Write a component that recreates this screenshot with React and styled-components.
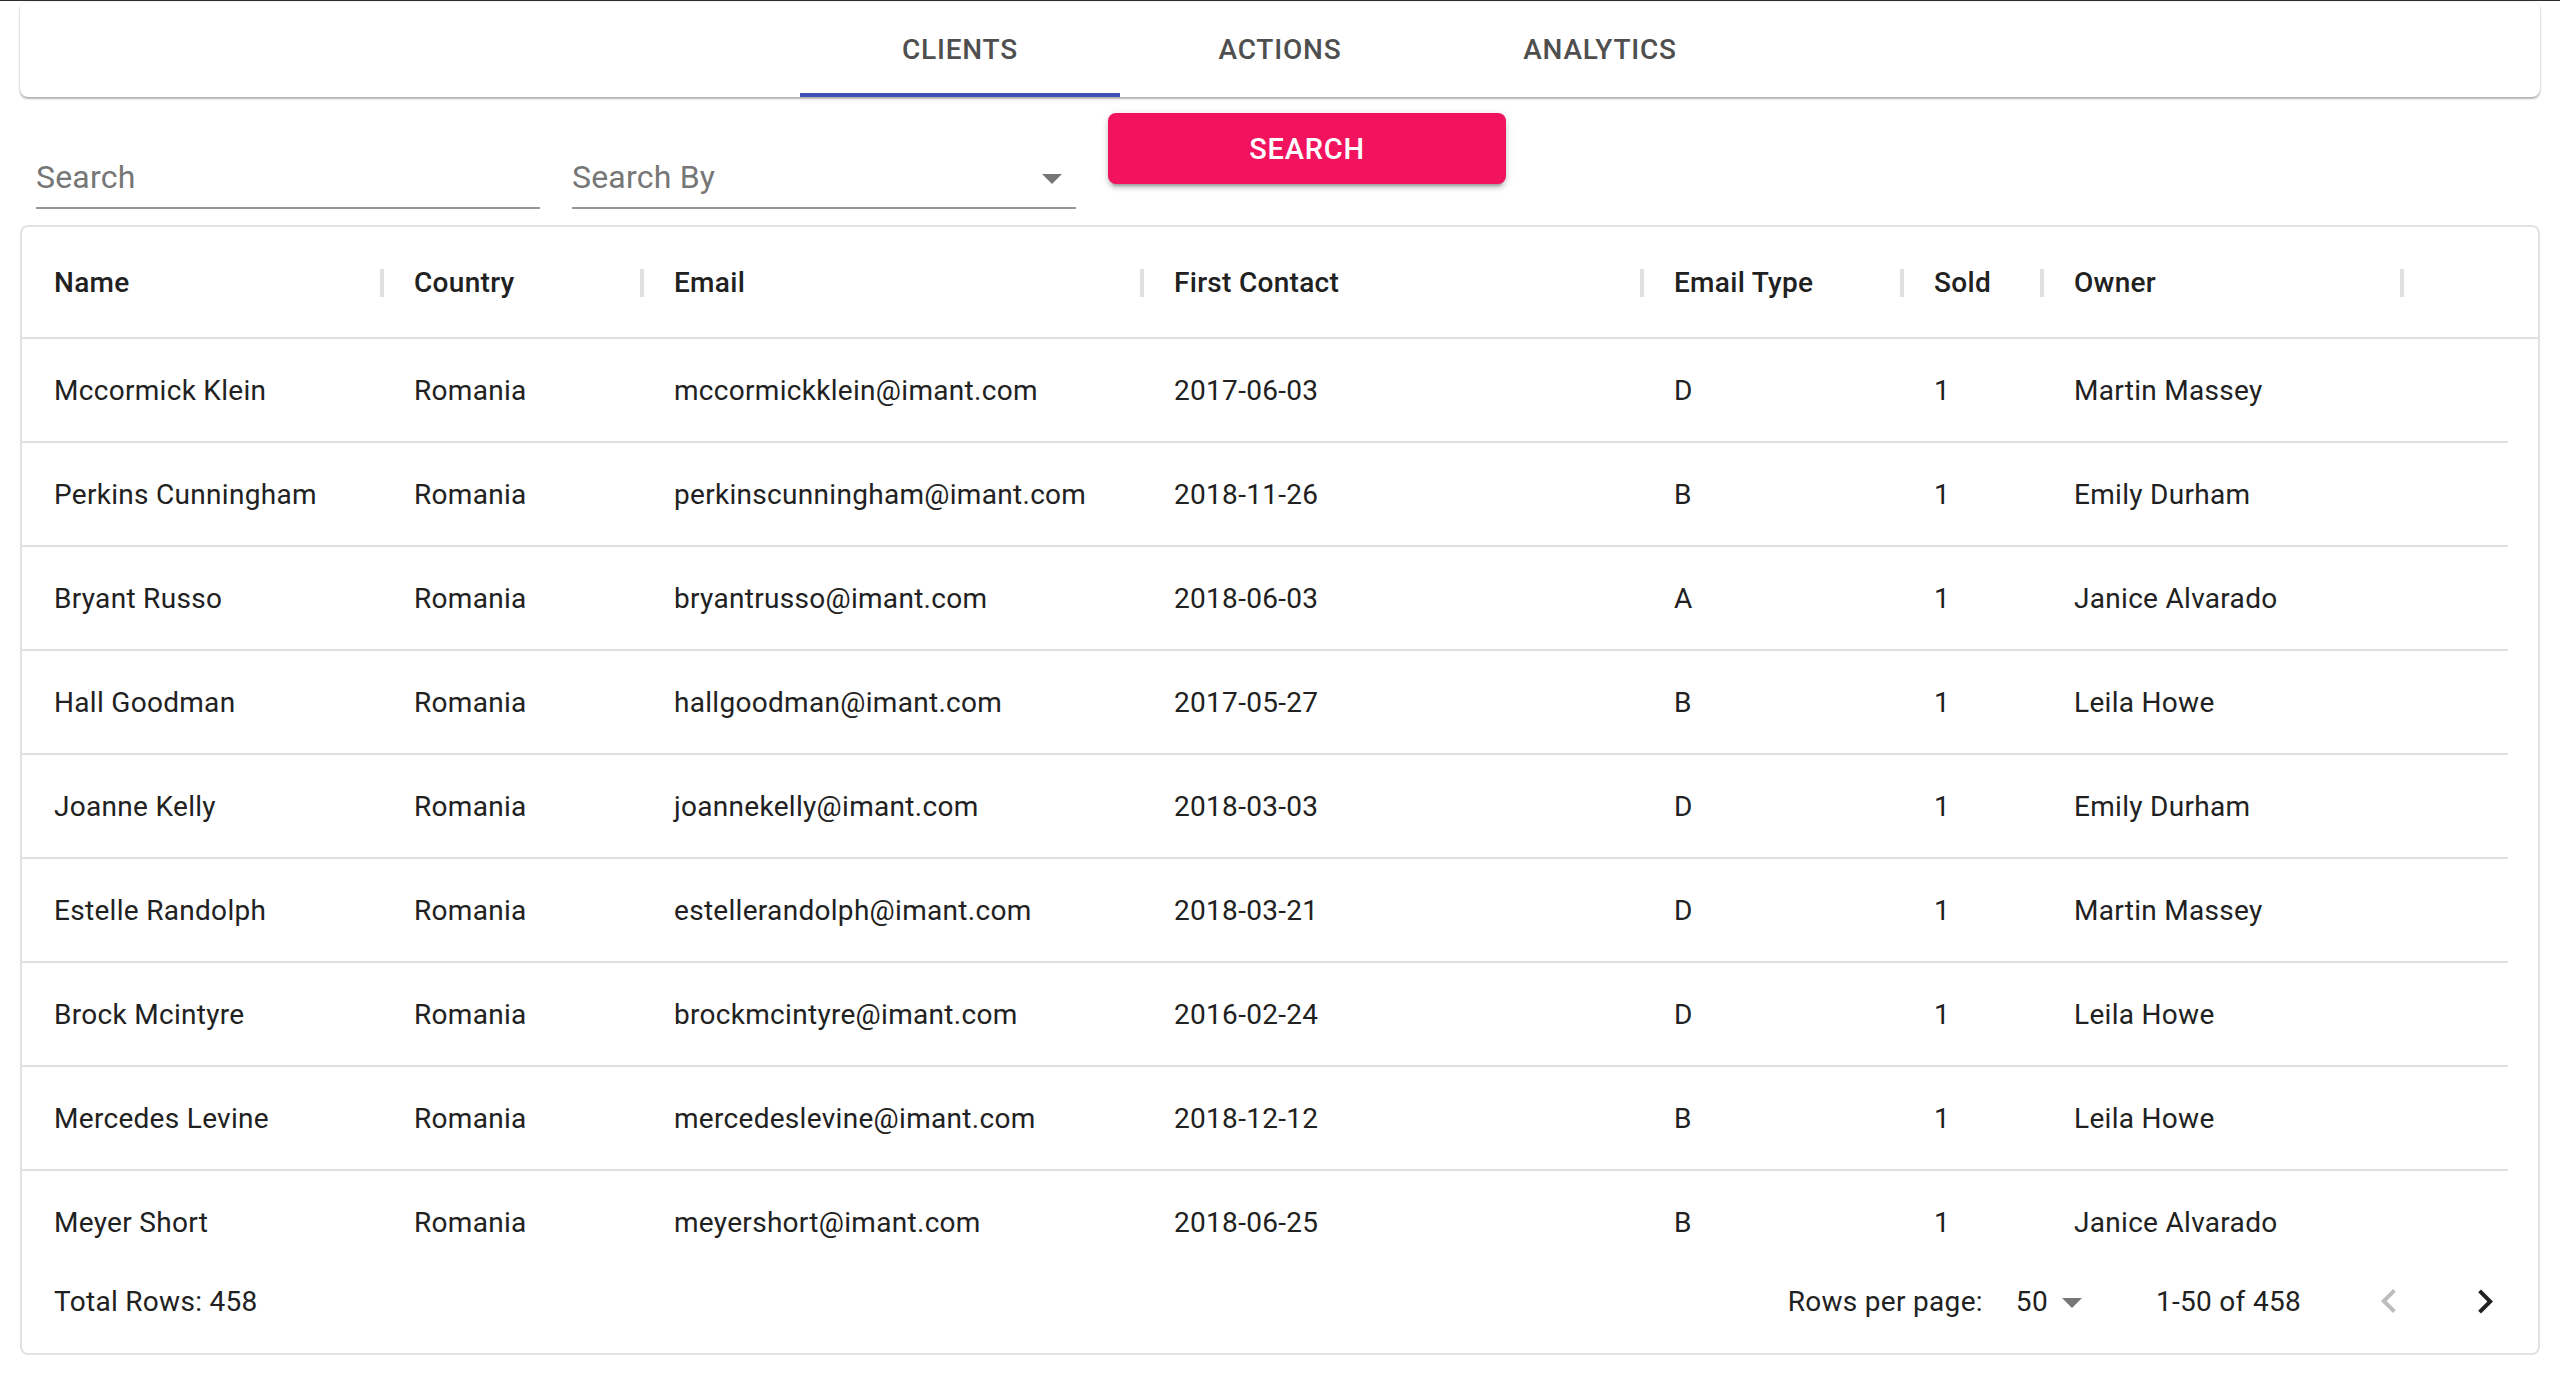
import styled, { createGlobalStyle } from 'styled-components';

const GlobalStyle = createGlobalStyle`
  html, body {
    margin: 0;
    padding: 0;
    background: #ffffff;
  }
  body {
    border-top: 1px solid #2b2b2b;
    font-family: Roboto, "Liberation Sans", Arial, sans-serif;
    color: #212121;
  }
`;

const Page = styled.div`
  padding: 1px 20px 0;
  display: flex;
  flex-direction: column;
`;

const TabBar = styled.nav`
  height: 95px;
  background: #ffffff;
  border-radius: 8px;
  box-shadow: 0 2px 2px rgba(0, 0, 0, 0.28), 0 0 3px rgba(0, 0, 0, 0.12);
  display: flex;
  justify-content: center;
  overflow: hidden;
`;

const Tab = styled.div`
  width: 320px;
  display: flex;
  align-items: center;
  justify-content: center;
  font-size: 28px;
  font-weight: 500;
  letter-spacing: 0.8px;
  text-transform: uppercase;
  color: #4f4f4f;
  box-sizing: border-box;
  border-bottom: 4px solid ${p => (p.$active ? '#3f51b5' : 'transparent')};
  padding-top: 4px;
`;

const SearchRow = styled.div`
  display: flex;
  align-items: flex-start;
  gap: 32px;
  margin: 16px 16px 0;
`;

const Field = styled.div`
  width: 504px;
  height: 96px;
  box-sizing: border-box;
  border-bottom: 2px solid #949494;
  display: flex;
  align-items: flex-end;
  justify-content: space-between;
  padding-bottom: 11px;
`;

const Placeholder = styled.span`
  font-size: 32px;
  line-height: 38px;
  letter-spacing: 0.2px;
  color: #767676;
`;

const DropArrow = styled.svg`
  width: 48px;
  height: 48px;
  fill: #767676;
  flex: none;
  margin-bottom: ${p => p.$drop || 0}px;
`;

const SearchButton = styled.button`
  width: 398px;
  height: 71px;
  border: none;
  border-radius: 8px;
  background: #f2135e;
  color: #ffffff;
  font-family: Roboto, "Liberation Sans", Arial, sans-serif;
  font-size: 29px;
  font-weight: 500;
  letter-spacing: 0.8px;
  text-transform: uppercase;
  box-shadow: 0 6px 2px -4px rgba(0, 0, 0, 0.2), 0 4px 4px rgba(0, 0, 0, 0.14), 0 2px 10px rgba(0, 0, 0, 0.12);
  cursor: pointer;
`;

const TableCard = styled.section`
  margin-top: 16px;
  border: 2px solid #e2e2e2;
  border-radius: 8px;
  background: #ffffff;
  display: flex;
  flex-direction: column;
  overflow: hidden;
  letter-spacing: 0.3px;
`;

const COLUMNS = '360px 260px 500px 500px 260px 140px 360px 1fr';

const HeaderRow = styled.div`
  display: grid;
  grid-template-columns: ${COLUMNS};
  height: 112px;
  box-sizing: border-box;
  border-bottom: 2px solid #e0e0e0;
`;

const HeadCell = styled.div`
  position: relative;
  display: flex;
  align-items: center;
  padding-left: 32px;
  font-size: 28px;
  font-weight: 500;
  color: #212121;

  &::after {
    content: '';
    display: ${p => (p.$sep ? 'block' : 'none')};
    position: absolute;
    right: -2px;
    top: 42px;
    width: 4px;
    height: 28px;
    background: #e0e0e0;
  }
`;

const Body = styled.div`
  height: 913px;
  overflow: hidden;
  padding-right: 30px;
`;

const Row = styled.div`
  display: grid;
  grid-template-columns: ${COLUMNS};
  height: 104px;
  box-sizing: border-box;
  border-bottom: 2px solid #e0e0e0;
`;

const Cell = styled.div`
  display: flex;
  align-items: center;
  padding-left: 32px;
  font-size: 28px;
  color: #212121;
  white-space: nowrap;
`;

const Footer = styled.div`
  height: 99px;
  display: flex;
  align-items: center;
  justify-content: space-between;
  padding: 0 5px 2px 32px;
  font-size: 28px;
  color: #212121;
`;

const Pagination = styled.div`
  display: flex;
  align-items: center;
`;

const PageSize = styled.div`
  display: flex;
  align-items: center;
  margin-left: 33px;
  margin-right: 60px;
`;

const IconButton = styled.button`
  width: 96px;
  height: 96px;
  border: none;
  background: transparent;
  padding: 0;
  display: flex;
  align-items: center;
  justify-content: center;
  margin-left: ${p => p.$gap || 0}px;
  fill: ${p => (p.disabled ? '#bdbdbd' : '#212121')};
`;

const clients = [
  ['Mccormick Klein', 'mccormickklein@imant.com', '2017-06-03', 'D', 'Martin Massey'],
  ['Perkins Cunningham', 'perkinscunningham@imant.com', '2018-11-26', 'B', 'Emily Durham'],
  ['Bryant Russo', 'bryantrusso@imant.com', '2018-06-03', 'A', 'Janice Alvarado'],
  ['Hall Goodman', 'hallgoodman@imant.com', '2017-05-27', 'B', 'Leila Howe'],
  ['Joanne Kelly', 'joannekelly@imant.com', '2018-03-03', 'D', 'Emily Durham'],
  ['Estelle Randolph', 'estellerandolph@imant.com', '2018-03-21', 'D', 'Martin Massey'],
  ['Brock Mcintyre', 'brockmcintyre@imant.com', '2016-02-24', 'D', 'Leila Howe'],
  ['Mercedes Levine', 'mercedeslevine@imant.com', '2018-12-12', 'B', 'Leila Howe'],
  ['Meyer Short', 'meyershort@imant.com', '2018-06-25', 'B', 'Janice Alvarado'],
];

const headers = ['Name', 'Country', 'Email', 'First Contact', 'Email Type', 'Sold', 'Owner'];

const ArrowDown = ({ drop }) => (
  <DropArrow viewBox="0 0 24 24" $drop={drop}>
    <path d="M7 10l5 5 5-5z" />
  </DropArrow>
);

export default function App() {
  return (
    <Page>
      <GlobalStyle />
      <TabBar>
        <Tab $active>Clients</Tab>
        <Tab>Actions</Tab>
        <Tab>Analytics</Tab>
      </TabBar>

      <SearchRow>
        <Field>
          <Placeholder>Search</Placeholder>
        </Field>
        <Field>
          <Placeholder>Search By</Placeholder>
          <ArrowDown drop={-6} />
        </Field>
        <SearchButton>Search</SearchButton>
      </SearchRow>

      <TableCard>
        <HeaderRow>
          {headers.map(h => (
            <HeadCell key={h} $sep>{h}</HeadCell>
          ))}
          <HeadCell />
        </HeaderRow>
        <Body>
          {clients.map(([name, email, date, type, owner]) => (
            <Row key={email}>
              <Cell>{name}</Cell>
              <Cell>Romania</Cell>
              <Cell>{email}</Cell>
              <Cell>{date}</Cell>
              <Cell>{type}</Cell>
              <Cell>1</Cell>
              <Cell>{owner}</Cell>
              <Cell />
            </Row>
          ))}
        </Body>
        <Footer>
          <span>Total Rows: 458</span>
          <Pagination>
            <span>Rows per page:</span>
            <PageSize>
              <span>50</span>
              <ArrowDown />
            </PageSize>
            <span>1-50 of 458</span>
            <IconButton disabled $gap={40}>
              <svg width="48" height="48" viewBox="0 0 24 24">
                <path d="M15.41 16.09l-4.58-4.59 4.58-4.59L14 5.5l-6 6 6 6z" />
              </svg>
            </IconButton>
            <IconButton>
              <svg width="48" height="48" viewBox="0 0 24 24">
                <path d="M8.59 16.34l4.58-4.59-4.58-4.59L10 5.75l6 6-6 6z" />
              </svg>
            </IconButton>
          </Pagination>
        </Footer>
      </TableCard>
    </Page>
  );
}
